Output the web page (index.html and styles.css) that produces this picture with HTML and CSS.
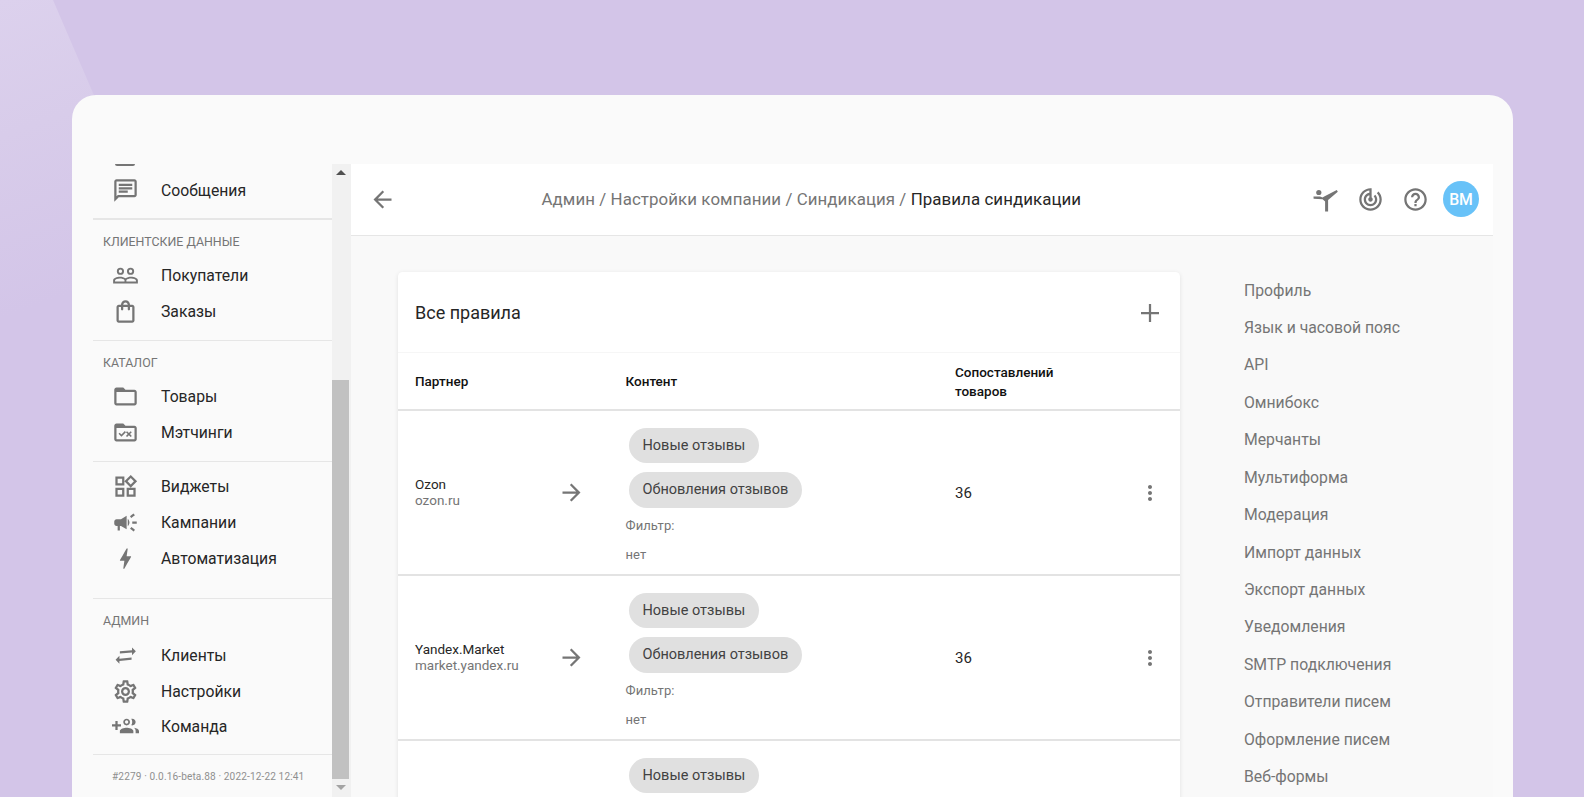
FILE: index.html
```html
<!DOCTYPE html>
<html lang="ru">
<head>
<meta charset="utf-8">
<title>Правила синдикации</title>
<link rel="stylesheet" href="styles.css">
</head>
<body>
<div class="backdrop"></div>
<div class="window">
  <aside class="sidebar">
    <div class="stub"></div>
    <div class="item"><svg class="icon" viewBox="0 0 24 24"><path d="M20 2H4c-1.1 0-1.99.9-1.99 2L2 22l4-4h14c1.1 0 2-.9 2-2V4c0-1.1-.9-2-2-2zm0 14H5.17L4 17.17V4h16v12zM6 12h8v2H6zm0-3h12v2H6zm0-3h12v2H6z"/></svg><span>Сообщения</span></div>
    <div class="divider first"></div>
    <div class="label">Клиентские данные</div>
    <div class="item"><svg class="icon" viewBox="0 0 24 24"><path d="M7.5 5a3.2 3.2 0 1 0 0 6.4 3.2 3.2 0 0 0 0-6.4zm0 1.7a1.5 1.5 0 1 1 0 3 1.5 1.5 0 0 1 0-3zm9-1.7a3.2 3.2 0 1 0 0 6.4 3.2 3.2 0 0 0 0-6.4zm0 1.7a1.5 1.5 0 1 1 0 3 1.5 1.5 0 0 1 0-3zM7 13c-2.6 0-6 1.1-6 3.2V19h22v-2.8c0-2.1-3.4-3.2-6-3.2-1.9 0-3.900.5-5 1.400C10.900 13.500 8.900 13 7 13zm0 1.700c1.700 0 3.400.5 4.100 1.200v1.400H2.700v-.9c0-.9 2.400-1.700 4.300-1.700zm10 0c1.900 0 4.300.8 4.300 1.700v.9h-8.500v-1.400c.8-.7 2.500-1.200 4.200-1.200z"/></svg><span>Покупатели</span></div>
    <div class="item"><svg class="icon" viewBox="0 0 24 24"><path d="M18 6h-2c0-2.210-1.790-4-4-4S8 3.790 8 6H6c-1.100 0-2 .9-2 2v12c0 1.100.9 2 2 2h12c1.100 0 2-.9 2-2V8c0-1.100-.9-2-2-2zm-6-2c1.100 0 2 .9 2 2h-4c0-1.100.9-2 2-2zm6 16H6V8h2v2c0 .55.45 1 1 1s1-.45 1-1V8h4v2c0 .55.45 1 1 1s1-.45 1-1V8h2v12z"/></svg><span>Заказы</span></div>
    <div class="divider"></div>
    <div class="label">Каталог</div>
    <div class="item"><svg class="icon" viewBox="0 0 24 24"><path d="M20 6h-8l-2-2H4c-1.100 0-1.990.9-1.990 2L2 18c0 1.100.9 2 2 2h16c1.100 0 2-.9 2-2V8c0-1.100-.9-2-2-2zm0 12H4V8h16v10z"/></svg><span>Товары</span></div>
    <div class="item"><svg class="icon" viewBox="0 0 24 24"><path d="M20 6h-8l-2-2H4c-1.100 0-1.990.9-1.990 2L2 18c0 1.100.9 2 2 2h16c1.100 0 2-.9 2-2V8c0-1.100-.9-2-2-2zm0 12H4V8h16v10z"/><path d="M5.800 13.200l1-1 1.600 1.600 3-3.100 1 1-4 4.100zM13.400 10.800l1.600 1.600 1.600-1.600 1 1-1.600 1.600 1.600 1.600-1 1-1.600-1.600-1.600 1.600-1-1 1.600-1.600-1.600-1.600z"/></svg><span>Мэтчинги</span></div>
    <div class="divider plain"></div>
    <div class="item"><svg class="icon" viewBox="0 0 24 24"><path d="M16.660 4.520l2.830 2.830-2.830 2.830-2.830-2.830 2.830-2.830M9 5v4H5V5h4m10 10v4h-4v-4h4M9 15v4H5v-4h4m7.660-13.310L11 7.340 16.660 13l5.660-5.660-5.660-5.650zM11 3H3v8h8V3zm10 10h-8v8h8v-8zm-10 0H3v8h8v-8z"/></svg><span>Виджеты</span></div>
    <div class="item"><svg class="icon" viewBox="0 0 24 24"><path d="M18 11v2h4v-2h-4zm-2 6.610c.96.71 2.210 1.650 3.200 2.390.4-.53.8-1.070 1.200-1.600-.99-.74-2.240-1.680-3.200-2.400-.4.54-.8 1.080-1.200 1.610zM20.400 5.600c-.4-.53-.8-1.070-1.200-1.600-.99.74-2.240 1.680-3.200 2.400.4.53.8 1.070 1.200 1.600.96-.72 2.210-1.650 3.200-2.400zM4 9c-1.100 0-2 .9-2 2v2c0 1.100.9 2 2 2h1v4h2v-4h1l5 3V6L8 9H4zm11.500 3c0-1.330-.58-2.530-1.500-3.350v6.690c.92-.81 1.500-2.010 1.500-3.340z"/></svg><span>Кампании</span></div>
    <div class="item"><svg class="icon" viewBox="0 0 24 24"><path d="M11 21h-1l1-7H7.500c-.58 0-.57-.32-.38-.66.19-.34.05-.08.07-.12C8.480 10.940 10.420 7.540 13 3h1l-1 7h3.500c.49 0 .56.33.47.51l-.07.15C12.960 17.550 11 21 11 21z"/></svg><span>Автоматизация</span></div>
    <div class="divider wide"></div>
    <div class="label">Админ</div>
    <div class="item"><svg class="icon" viewBox="0 0 24 24"><path d="M21.200 8.300l-3.400-3.500v2.500L7 8.300v2l10.800-1v2.500zM3.200 15.800l3.400 3.500v-2.500l10.800-1v-2l-10.800 1v-2.500z"/></svg><span>Клиенты</span></div>
    <div class="item"><svg class="icon" viewBox="0 0 24 24"><path d="M19.430 12.980c.04-.32.07-.64.07-.98 0-.34-.03-.66-.07-.98l2.110-1.650c.19-.15.24-.42.12-.64l-2-3.460c-.09-.16-.26-.25-.44-.25-.06 0-.12.01-.17.03l-2.490 1c-.52-.4-1.080-.73-1.690-.98l-.38-2.650C14.460 2.180 14.250 2 14 2h-4c-.25 0-.46.18-.49.42l-.38 2.650c-.61.25-1.170.59-1.690.98l-2.490-1c-.06-.02-.12-.03-.18-.03-.17 0-.34.09-.43.25l-2 3.460c-.13.22-.07.49.12.64l2.110 1.650c-.04.32-.07.65-.07.98 0 .33.03.66.07.98l-2.110 1.650c-.19.15-.24.42-.12.64l2 3.460c.09.16.26.25.44.25.06 0 .12-.01.17-.03l2.490-1c.52.4 1.080.73 1.690.98l.38 2.650c.03.24.24.42.49.42h4c.25 0 .46-.18.49-.42l.38-2.650c.61-.25 1.170-.59 1.690-.98l2.490 1c.06.02.12.03.18.03.17 0 .34-.09.43-.25l2-3.460c.12-.22.07-.49-.12-.64l-2.110-1.650zm-1.980-1.710c.04.31.05.52.05.73 0 .21-.02.43-.05.73l-.14 1.130.89.7 1.080.84-.7 1.210-1.270-.51-1.040-.42-.9.68c-.43.32-.84.56-1.250.73l-1.060.43-.16 1.130-.2 1.350h-1.400l-.19-1.350-.16-1.130-1.060-.43c-.43-.18-.83-.41-1.230-.71l-.91-.7-1.060.43-1.270.51-.7-1.210 1.080-.84.89-.7-.14-1.130c-.03-.31-.05-.54-.05-.74s.02-.43.05-.73l.14-1.130-.89-.7-1.080-.84.7-1.210 1.270.51 1.040.42.9-.68c.43-.32.84-.56 1.250-.73l1.060-.43.16-1.130.2-1.350h1.390l.19 1.350.16 1.130 1.060.43c.43.18.83.41 1.230.71l.91.7 1.060-.43 1.270-.51.7 1.210-1.070.85-.89.7.14 1.130zM12 8c-2.210 0-4 1.790-4 4s1.790 4 4 4 4-1.790 4-4-1.790-4-4-4zm0 6c-1.100 0-2-.9-2-2s.9-2 2-2 2 .9 2 2-.9 2-2 2z"/></svg><span>Настройки</span></div>
    <div class="item"><svg class="icon" viewBox="0 0 24 24"><path fill-rule="evenodd" d="M8 10H5V7H3v3H0v2h3v3h2v-3h3v-2zm10 1c1.660 0 3-1.340 3-3s-1.340-3-3-3c-.32 0-.63.05-.91.14.57.81.9 1.790.9 2.860s-.34 2.040-.9 2.860c.28.09.59.14.91.14zm-5 0c1.660 0 3-1.340 3-3s-1.340-3-3-3-3 1.340-3 3 1.340 3 3 3zm0-4.500a1.500 1.500 0 1 1 0 3 1.500 1.500 0 0 1 0-3zm6.620 6.660c.83.73 1.380 1.660 1.380 2.840v2h3v-2c0-1.540-2.370-2.490-4.380-2.840zM13 13c-2 0-6 1-6 3v2h12v-2c0-2-4-3-6-3z"/></svg><span>Команда</span></div>
    <div class="divider last"></div>
    <div class="version">#2279 · 0.0.16-beta.88 · 2022-12-22 12:41</div>
  </aside>
  <div class="scrollbar">
    <div class="arrow-up"></div>
    <div class="thumb"></div>
    <div class="arrow-down"></div>
  </div>
  <main class="main">
    <header class="topbar">
      <svg class="icon" viewBox="0 0 24 24"><path d="M20 11H7.830l5.590-5.590L12 4l-8 8 8 8 1.410-1.410L7.830 13H20v-2z"/></svg>
      <div class="crumbs">Админ / Настройки компании / Синдикация / <b>Правила синдикации</b></div>
      <div class="actions">
        <svg class="icon" viewBox="0 0 27 27"><circle cx="6.800" cy="6.500" r="2.600"/><path d="M1.500 10.500l6.500.1 2.600 1 1.600-1.200L24.800 4l1 1.800-9.700 8.200V25.500h-3V15.500l-2.500-2.200-9-.5z"/></svg>
        <svg class="icon" viewBox="0 0 24 24"><path d="M19.070 4.930l-1.410 1.410C19.100 7.790 20 9.790 20 12c0 4.420-3.580 8-8 8s-8-3.580-8-8c0-4.080 3.050-7.440 7-7.930v2.020C8.160 6.570 6 9.030 6 12c0 3.310 2.690 6 6 6s6-2.690 6-6c0-1.660-.67-3.160-1.760-4.240l-1.410 1.410C15.550 9.900 16 10.900 16 12c0 2.210-1.790 4-4 4s-4-1.790-4-4c0-1.860 1.280-3.410 3-3.860v2.140c-.6.35-1 .98-1 1.720 0 1.100.9 2 2 2s2-.9 2-2c0-.74-.4-1.380-1-1.720V2h-1C6.480 2 2 6.480 2 12s4.480 10 10 10 10-4.480 10-10c0-2.760-1.120-5.260-2.930-7.070z"/></svg>
        <svg class="icon" viewBox="0 0 24 24"><path d="M11 18h2v-2h-2v2zm1-16C6.480 2 2 6.480 2 12s4.480 10 10 10 10-4.480 10-10S17.520 2 12 2zm0 18c-4.410 0-8-3.590-8-8s3.590-8 8-8 8 3.590 8 8-3.590 8-8 8zm0-14c-2.210 0-4 1.790-4 4h2c0-1.100.9-2 2-2s2 .9 2 2c0 2-3 1.750-3 5h2c0-2.250 3-2.500 3-5 0-2.210-1.790-4-4-4z"/></svg>
        <div class="avatar">BM</div>
      </div>
    </header>
    <div class="content">
      <section class="card">
        <div class="card-head">
          <h1>Все правила</h1>
          <svg class="plus" viewBox="0 0 18 18"><path d="M9 0v18M0 9h18"/></svg>
        </div>
        <div class="row head-row">
          <div>Партнер</div>
          <div></div>
          <div>Контент</div>
          <div class="count-head">Сопоставлений товаров</div>
          <div></div>
        </div>
        <div class="row rule">
          <div class="partner"><div>Ozon</div><div class="muted">ozon.ru</div></div>
          <svg class="icon" viewBox="0 0 24 24"><path d="M12 4l-1.410 1.410L16.170 11H4v2h12.170l-5.580 5.590L12 20l8-8z"/></svg>
          <div class="rule-content">
            <div class="chip">Новые отзывы</div>
            <div class="chip">Обновления отзывов</div>
            <div class="filter">Фильтр:</div>
            <div class="filter">нет</div>
          </div>
          <div class="count">36</div>
          <svg class="dots" viewBox="0 0 24 24"><path d="M12 8c1.100 0 2-.9 2-2s-.9-2-2-2-2 .9-2 2 .9 2 2 2zm0 2c-1.100 0-2 .9-2 2s.9 2 2 2 2-.9 2-2-.9-2-2-2zm0 6c-1.100 0-2 .9-2 2s.9 2 2 2 2-.9 2-2-.9-2-2-2z"/></svg>
        </div>
        <div class="row rule">
          <div class="partner"><div>Yandex.Market</div><div class="muted">market.yandex.ru</div></div>
          <svg class="icon" viewBox="0 0 24 24"><path d="M12 4l-1.410 1.410L16.170 11H4v2h12.170l-5.580 5.590L12 20l8-8z"/></svg>
          <div class="rule-content">
            <div class="chip">Новые отзывы</div>
            <div class="chip">Обновления отзывов</div>
            <div class="filter">Фильтр:</div>
            <div class="filter">нет</div>
          </div>
          <div class="count">36</div>
          <svg class="dots" viewBox="0 0 24 24"><path d="M12 8c1.100 0 2-.9 2-2s-.9-2-2-2-2 .9-2 2 .9 2 2 2zm0 2c-1.100 0-2 .9-2 2s.9 2 2 2 2-.9 2-2-.9-2-2-2zm0 6c-1.100 0-2 .9-2 2s.9 2 2 2 2-.9 2-2-.9-2-2-2z"/></svg>
        </div>
        <div class="row rule">
          <div></div>
          <div></div>
          <div class="rule-content">
            <div class="chip">Новые отзывы</div>
          </div>
        </div>
      </section>
      <nav class="side-nav">
        <a>Профиль</a>
        <a>Язык и часовой пояс</a>
        <a>API</a>
        <a>Омнибокс</a>
        <a>Мерчанты</a>
        <a>Мультиформа</a>
        <a>Модерация</a>
        <a>Импорт данных</a>
        <a>Экспорт данных</a>
        <a>Уведомления</a>
        <a>SMTP подключения</a>
        <a>Отправители писем</a>
        <a>Оформление писем</a>
        <a>Веб-формы</a>
      </nav>
    </div>
  </main>
</div>
</body>
</html>
```

FILE: styles.css
```css
* { box-sizing: border-box; }
html, body { margin: 0; height: 797px; overflow: hidden; }
body {
  background: #d3c5e8;
  font-family: Roboto, "Noto Sans", sans-serif;
  color: #212121;
  padding: 95px 0 0 72px;
  position: relative;
}
.backdrop {
  position: absolute;
  left: 0; top: 0;
  width: 100px; height: 420px;
  background: linear-gradient(160deg, #dcd1ed 0%, #d8ccea 30%, #d3c5e8 70%);
  clip-path: polygon(0 0, 53px 0, 96px 100px, 72px 320px, 0 420px);
}
.window {
  position: relative;
  width: 1441px;
  height: 760px;
  background: #fafafa;
  border-radius: 24px 24px 0 0;
  padding-top: 69px;
  display: flex;
  align-items: flex-start;
}
.icon { width: 27px; height: 27px; fill: #757575; flex: none; display: block; }

/* sidebar */
.sidebar { width: 259.5px; padding-left: 21px; flex: none; }
.stub { width: 20px; height: 2px; margin: 0 0 6.5px 22px; background: #757575; border-radius: 0 0 2px 2px; }
.item { height: 35.85px; display: flex; align-items: center; padding-left: 18.5px; gap: 22.5px; font-size: 15.75px; color: #262626; }
.item span { white-space: nowrap; }
.divider { height: 1.5px; background: #e6e6e6; margin-top: 10px; }
.divider.plain { margin-bottom: 6.5px; }
.divider.wide { margin-top: 21.5px; }
.divider.last { margin-top: 9px; height: 1px; }
.label { font-size: 12.4px; line-height: 20px; padding: 12px 0 6px 10px; text-transform: uppercase; color: #757575; white-space: nowrap; }
.version { font-size: 10.1px; letter-spacing: .12px; color: #8f8f8f; padding: 14px 0 0 19px; white-space: nowrap; line-height: 16px; }

/* scrollbar */
.scrollbar { width: 19px; height: 640px; flex: none; background: #f1f1f1; margin-right: .5px; display: flex; flex-direction: column; align-items: flex-start; }
.arrow-up { width: 0; height: 0; margin: 6px 0 0 4px; border: 5px solid transparent; border-top: 0; border-bottom: 5px solid #505050; }
.thumb { width: 17.5px; height: 399px; margin-top: 205px; background: #c1c1c1; }
.arrow-down { width: 0; height: 0; margin: 6px 0 0 4px; border: 5px solid transparent; border-bottom: 0; border-top: 5px solid #a3a3a3; }

/* main */
.main { width: 1142px; flex: none; }
.topbar { height: 72px; background: #fff; border-bottom: 1.5px solid #e6e6e6; display: flex; align-items: center; padding: 0 14px 1px 17.5px; }
.crumbs { margin-left: 146px; font-size: 16.875px; letter-spacing: .08px; color: #757575; white-space: nowrap; }
.crumbs b { font-weight: 400; color: #262626; }
.actions { margin-left: auto; display: flex; align-items: center; gap: 18px; }
.avatar { width: 36px; height: 36px; margin-left: -3.5px; border-radius: 50%; background: #68c2f8; color: #fff; font-size: 15.75px; font-weight: 500; display: flex; align-items: center; justify-content: center; }

.content { background: #f9f9f9; height: 600px; padding: 36px 0 0 47px; display: flex; align-items: flex-start; }
.card { width: 782px; flex: none; background: #fff; border-radius: 4.5px 4.5px 0 0; box-shadow: 0 1px 4px rgba(0,0,0,.1); }
.card-head { height: 81px; border-bottom: 1px solid #f6f6f6; display: flex; align-items: center; justify-content: space-between; padding: 0 21px 0 17px; }
.card-head h1 { margin: 0; font-size: 18px; font-weight: 400; color: #262626; }
.plus { width: 18px; height: 18px; margin-top: 2px; fill: none; stroke: #757575; stroke-width: 2.25; display: block; }

.row { display: grid; grid-template-columns: 143px 67.5px 329.5px 181.5px 27px; padding-left: 17px; align-items: center; }
.head-row { height: 58px; padding-top: 1px; border-bottom: 2px solid #e3e3e3; font-size: 13.5px; font-weight: 500; line-height: 19px; color: #111; }
.count-head { width: 110px; }
.rule { height: 165px; padding-bottom: 2px; border-bottom: 2px solid #e3e3e3; }
.partner { font-size: 13.5px; line-height: 15.5px; color: #262626; }
.muted { color: #757575; }
.rule-content { align-self: start; padding-top: 16.7px; display: flex; flex-direction: column; align-items: flex-start; }
.chip { height: 35.5px; line-height: 35.5px; margin: 0 0 9px 3.5px; padding: 0 13.5px; border-radius: 18px; background: #e0e0e0; font-size: 14.5px; color: #424242; white-space: nowrap; }
.chip + .filter { margin-top: -1px; }
.filter { font-size: 13px; line-height: 20px; margin-bottom: 9.6px; color: #757575; letter-spacing: .1px; }
.count { font-size: 15px; letter-spacing: .15px; color: #262626; }
.dots { width: 24px; height: 24px; fill: #757575; justify-self: center; display: block; }

.side-nav { margin-left: 64px; margin-top: -.5px; display: flex; flex-direction: column; }
.side-nav a { height: 37.45px; line-height: 37.45px; font-size: 15.75px; color: #757575; white-space: nowrap; }
```
